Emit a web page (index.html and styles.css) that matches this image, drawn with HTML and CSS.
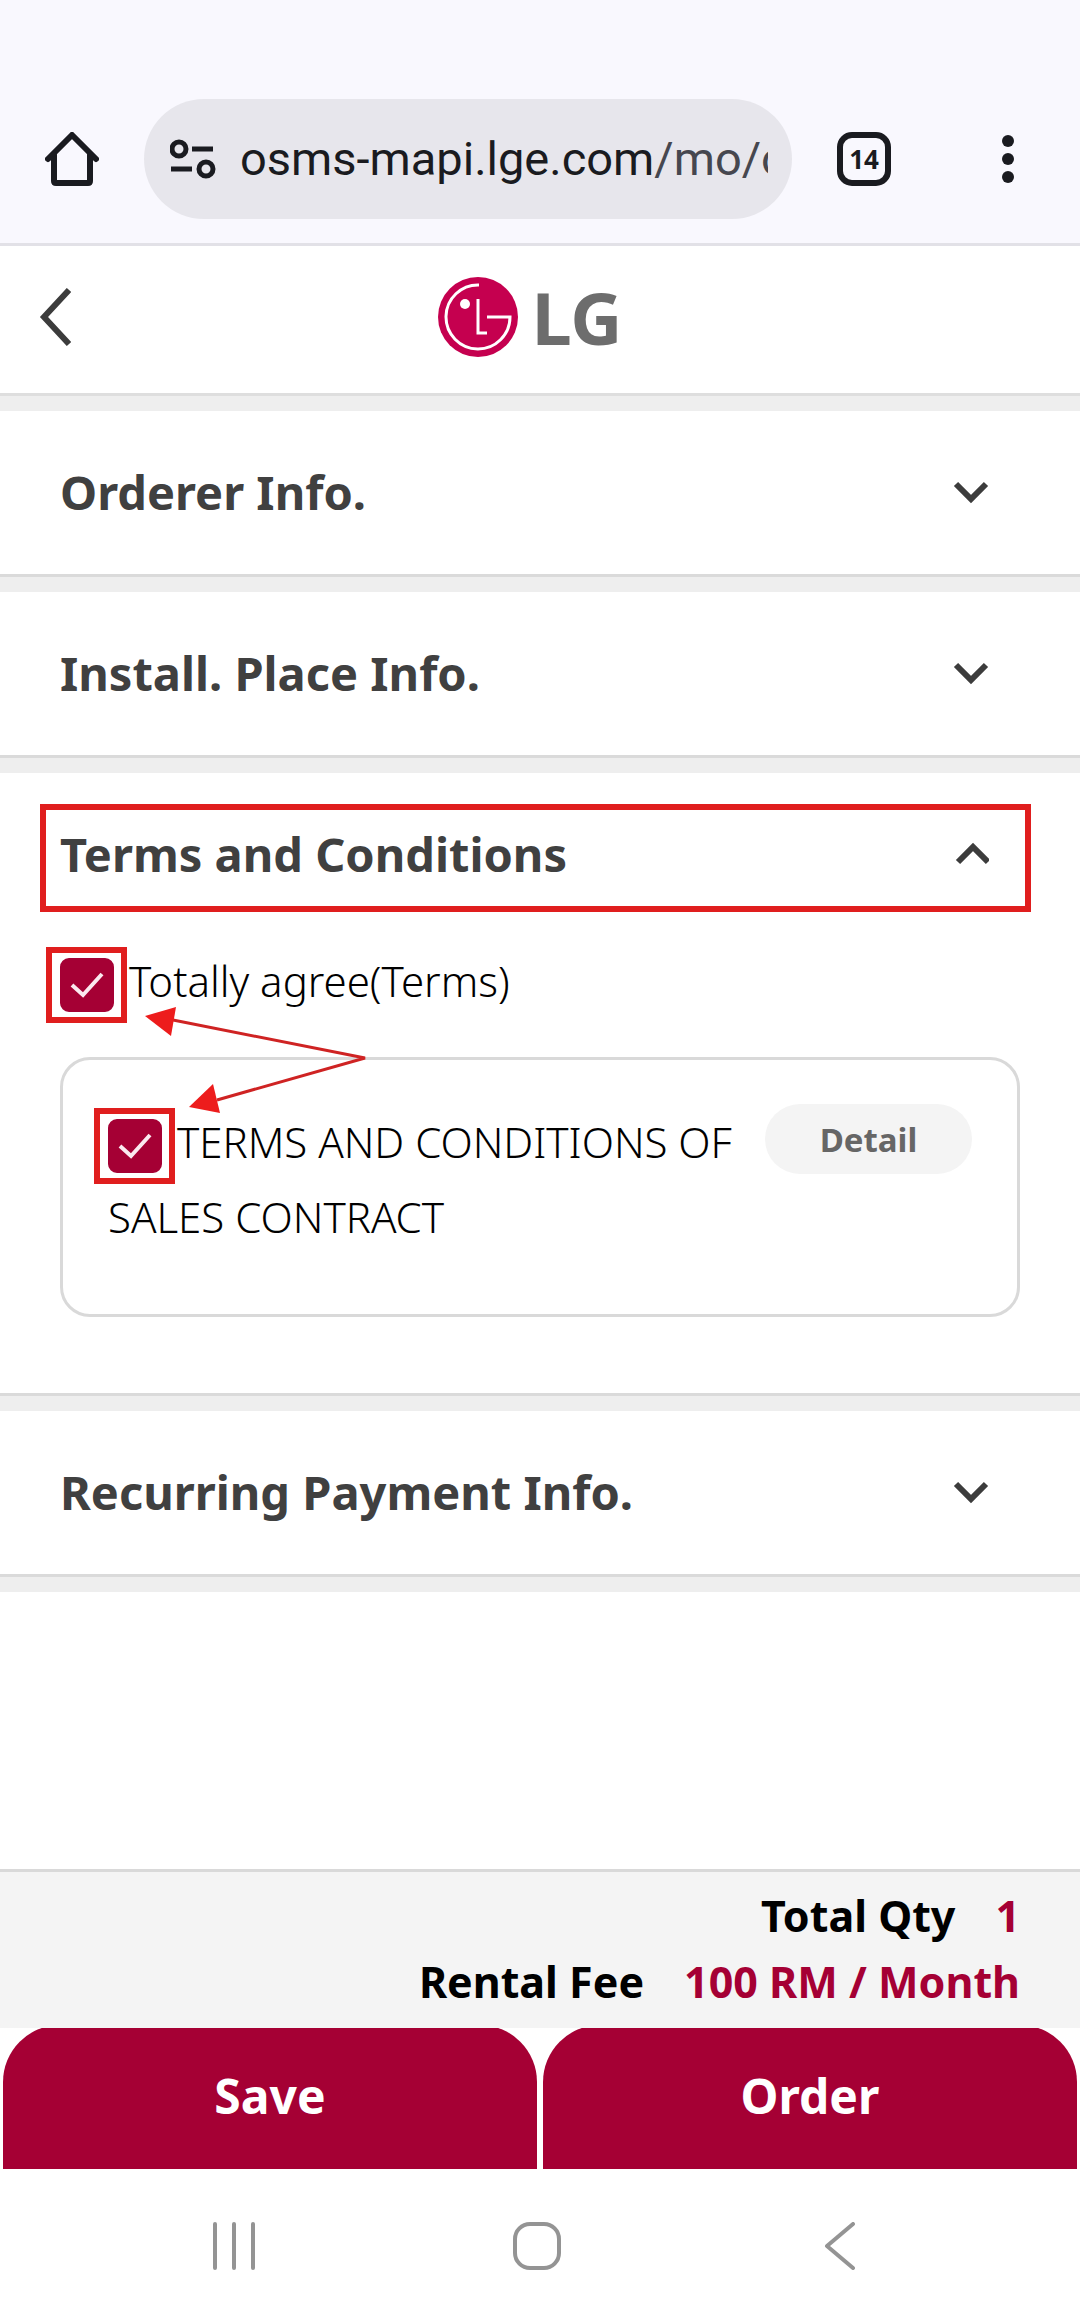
FILE: index.html
```html
<!DOCTYPE html>
<html lang="en">
<head>
    <meta charset="UTF-8">
    <meta name="viewport" content="width=device-width, initial-scale=1.0">
    <title>LG Order - Terms and Conditions</title>
    <link rel="stylesheet" href="styles.css">
</head>
<body>
    <!-- Browser bar -->
    <div class="browser-bar">
        <button type="button" class="icon-btn" aria-label="Home">
            <svg width="54" height="54" viewBox="0 0 54 54" fill="none" stroke="#1a1b20" stroke-width="6" stroke-linecap="round" stroke-linejoin="round">
                <path d="M3 27L27 3L51 27"/>
                <path d="M9 23V49Q9 51 11 51H43Q45 51 45 49V23"/>
            </svg>
        </button>
        <button type="button" class="url-bar">
            <svg class="site-icon" width="46" height="40" viewBox="0 0 46 40" fill="none" stroke="#1a1b20" stroke-width="5">
                <circle cx="9" cy="10" r="7"/>
                <path d="M22 10H43M1 30H22"/>
                <circle cx="36" cy="30" r="7"/>
            </svg>
            <span class="url">osms-mapi.lge.com<span class="url-path">/mo/o</span></span>
        </button>
        <button type="button" class="tabs" aria-label="Open tabs">14</button>
        <button type="button" class="icon-btn menu" aria-label="Menu">
            <svg width="12" height="48" viewBox="0 0 12 48" fill="#1a1b20">
                <circle cx="6" cy="6" r="6"/>
                <circle cx="6" cy="24" r="6"/>
                <circle cx="6" cy="42" r="6"/>
            </svg>
        </button>
    </div>

    <header class="header">
        <a href="#" class="back" aria-label="Back">
            <svg width="32" height="58" viewBox="0 0 32 58" fill="none" stroke="#3c3c3c" stroke-width="6">
                <path d="M30 2L5 29L30 56"/>
            </svg>
        </a>
        <a href="#" class="logo" aria-label="LG">
            <svg width="80" height="80" viewBox="0 0 80 80" fill="none" stroke="#fff" stroke-width="3">
                <circle cx="40" cy="40" r="40" fill="#c5004f" stroke="none"/>
                <path d="M41 8A32 32 0 1 0 72 40H49"/>
                <path d="M40 22V56H49"/>
                <circle cx="27" cy="27" r="5" fill="#fff" stroke="none"/>
            </svg>
            <span>LG</span>
        </a>
    </header>

    <main>
        <section class="section">
            <h2>
                <button type="button" class="section-title" aria-expanded="false">
                    Orderer Info.
                    <svg width="36" height="24" viewBox="0 0 36 24"><path d="M3 4L18 19L33 4"/></svg>
                </button>
            </h2>
        </section>

        <section class="section">
            <h2>
                <button type="button" class="section-title" aria-expanded="false">
                    Install. Place Info.
                    <svg width="36" height="24" viewBox="0 0 36 24"><path d="M3 4L18 19L33 4"/></svg>
                </button>
            </h2>
        </section>

        <section class="section">
            <h2>
                <button type="button" class="section-title marked" aria-expanded="true">
                    Terms and Conditions
                    <svg width="36" height="24" viewBox="0 0 36 24"><path d="M5 20L20 5L35 20"/></svg>
                </button>
            </h2>
            <div class="terms">
                <label class="agree"><span class="check"><input type="checkbox" checked></span>Totally agree(Terms)</label>
                <div class="terms-card">
                    <label class="agree"><span class="check"><input type="checkbox" checked></span>TERMS AND CONDITIONS OF SALES CONTRACT</label>
                    <button type="button" class="detail">Detail</button>
                </div>
                <!-- Arrows pointing at the two tick boxes -->
                <svg class="arrows" width="222" height="108" viewBox="0 0 222 108" fill="#ed1c1c">
                    <path d="M28 14L220 52L72 94" fill="none" stroke="#cf2323" stroke-width="3"/>
                    <path d="M0 10L31 1L26 30Z"/>
                    <path d="M44 101L68 78L75 107Z"/>
                </svg>
            </div>
        </section>

        <section class="section">
            <h2>
                <button type="button" class="section-title" aria-expanded="false">
                    Recurring Payment Info.
                    <svg width="36" height="24" viewBox="0 0 36 24"><path d="M3 4L18 19L33 4"/></svg>
                </button>
            </h2>
        </section>
    </main>

    <footer>
        <dl class="totals">
            <div><dt>Total Qty</dt><dd>1</dd></div>
            <div><dt>Rental Fee</dt><dd>100 RM / Month</dd></div>
        </dl>
        <div class="actions">
            <button type="button">Save</button>
            <button type="button">Order</button>
        </div>
    </footer>

    <!-- Phone navigation -->
    <nav class="phone-nav">
        <button type="button" class="icon-btn" aria-label="Recent apps">
            <svg width="48" height="48" viewBox="0 0 48 48"><path d="M5 2V46M24 2V46M43 2V46"/></svg>
        </button>
        <button type="button" class="icon-btn" aria-label="Home screen">
            <svg width="48" height="48" viewBox="0 0 48 48"><rect x="2" y="2" width="44" height="44" rx="15"/></svg>
        </button>
        <button type="button" class="icon-btn" aria-label="Go back">
            <svg width="48" height="48" viewBox="0 0 48 48"><path d="M37 2L11 24L37 46"/></svg>
        </button>
    </nav>
</body>
</html>
```
FILE: styles.css
```css
* {
    box-sizing: border-box;
}
body {
    margin: 0;
    min-height: 100vh;
    display: flex;
    flex-direction: column;
    font-family: "Noto Sans", "Open Sans", sans-serif;
    color: #000;
    background-color: #fff;
}
button {
    font-family: inherit;
    border: none;
    padding: 0;
    background: none;
    color: inherit;
    cursor: pointer;
}
svg {
    display: block;
    flex-shrink: 0;
}
.icon-btn {
    flex-shrink: 0;
}
.browser-bar {
    display: flex;
    align-items: center;
    padding: 99px 66px 24px 45px;
    background-color: #f9f8fe;
    border-bottom: 3px solid #e2e1e7;
}
.url-bar {
    flex: 1;
    min-width: 0;
    height: 120px;
    margin: 0 45px;
    padding: 0 24px 0 26px;
    display: flex;
    align-items: center;
    gap: 24px;
    border-radius: 60px;
    background-color: #e7e6ec;
}
.url {
    flex: 1;
    overflow: hidden;
    white-space: nowrap;
    text-align: left;
    font-family: Roboto, sans-serif;
    font-size: 47px;
    line-height: 64px;
    color: #1a1b20;
}
.url-path {
    color: #46474f;
}
.tabs {
    flex-shrink: 0;
    width: 54px;
    height: 54px;
    border: 6px solid #1a1b20;
    border-radius: 15px;
    font-family: "Open Sans", sans-serif;
    font-size: 26px;
    font-weight: bold;
    line-height: 40px;
    color: #1a1b20;
}
.menu {
    margin-left: 111px;
}
.header {
    display: grid;
    grid-template-columns: 1fr auto 1fr;
    align-items: center;
    height: 150px;
    padding: 0 39px 6px;
    border-bottom: 3px solid #dedede;
}
.header + main {
    border-top: 15px solid #eee;
}
.logo {
    display: flex;
    align-items: center;
    gap: 14px;
    font-size: 72px;
    line-height: 80px;
    font-weight: bold;
    color: #6d6d6d;
    text-decoration: none;
    padding-right: 20px;
}
main {
    flex: 1;
}
.section {
    border-bottom: 15px solid #eee;
    box-shadow: inset 0 -3px #dadada;
    padding-bottom: 3px;
}
h2 {
    margin: 0;
}
.section-title {
    position: relative;
    display: flex;
    align-items: center;
    justify-content: space-between;
    width: 100%;
    height: 163px;
    padding: 0 91px 2px 60px;
    font-size: 47px;
    line-height: 66px;
    font-weight: bold;
    color: #404040;
}
.section-title svg {
    fill: none;
    stroke: #3c3c3c;
    stroke-width: 6;
}
/* red frame round the open section title */
.marked::after {
    content: "";
    position: absolute;
    inset: 31px 49px 24px 40px;
    border: 6px solid #e01e1e;
}
.terms {
    position: relative;
    padding: 7px 60px 76px;
}
.agree {
    display: block;
    font-size: 42px;
    line-height: 75px;
    font-weight: 300;
}
.check {
    position: relative;
    display: inline-block;
    width: 54px;
    height: 54px;
    margin-right: 15px;
    vertical-align: -15px;
}
.check::after {
    content: "";
    position: absolute;
    inset: -11px -13px -11px -14px;
    border: 6px solid #e01e1e;
    pointer-events: none;
}
.check input {
    appearance: none;
    display: block;
    width: 54px;
    height: 54px;
    margin: 0;
    border: 2px solid #a50034;
    border-radius: 9px;
}
.check input:checked {
    background: #a50034 url("data:image/svg+xml,%3Csvg xmlns='http://www.w3.org/2000/svg' viewBox='0 0 50 50' fill='none' stroke='%23fbe9ef' stroke-width='4'%3E%3Cpath d='M10 25L21 35L40 14'/%3E%3C/svg%3E") center / 50px 50px no-repeat;
}
.terms-card {
    display: flex;
    align-items: flex-start;
    gap: 24px;
    margin-top: 39px;
    padding: 44px 45px 60px;
    border: 3px solid #d9d9d9;
    border-radius: 30px;
}
.terms-card .agree {
    flex: 1;
}
.detail {
    flex-shrink: 0;
    width: 207px;
    height: 70px;
    border-radius: 35px;
    background-color: #f4f4f4;
    font-size: 33px;
    font-weight: bold;
    color: #666;
}
.arrows {
    position: absolute;
    left: 145px;
    top: 70px;
    pointer-events: none;
}
.totals {
    margin: 0;
    padding: 11px 60px 13px;
    border-top: 3px solid #d9d9d9;
    background-color: #f4f4f4;
    font-size: 43px;
    line-height: 66px;
    font-weight: bold;
}
.totals div {
    display: flex;
    justify-content: flex-end;
    gap: 40px;
}
.totals dd {
    margin: 0;
    color: #a50034;
}
.actions {
    display: grid;
    grid-template-columns: 1fr 1fr;
    gap: 6px;
    padding: 0 3px;
    overflow: hidden;
}
.actions button {
    height: 144px;
    margin-top: -3px;
    padding-bottom: 3px;
    border-radius: 57px 57px 0 0;
    background-color: #a50034;
    color: #fff;
    font-size: 48px;
    font-weight: bold;
}
.phone-nav {
    display: flex;
    justify-content: space-between;
    align-items: center;
    height: 147px;
    padding: 6px 216px 0 210px;
}
.phone-nav svg {
    fill: none;
    stroke: #949494;
    stroke-width: 4;
    stroke-linecap: round;
    stroke-linejoin: round;
}
```
